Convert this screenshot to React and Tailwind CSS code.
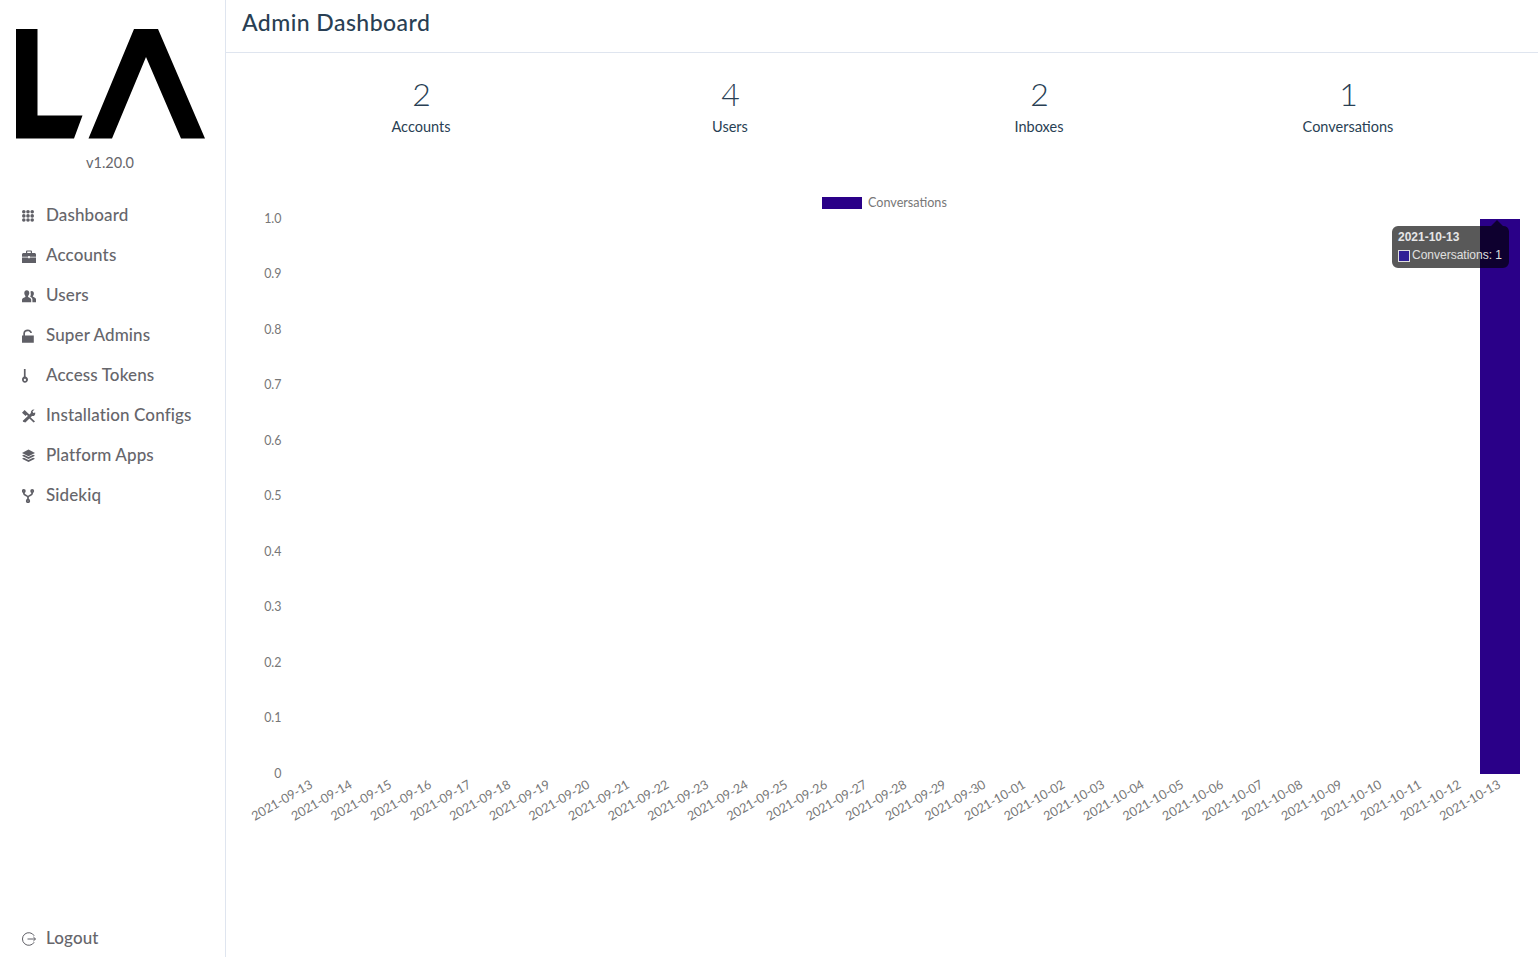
import React from "react";

const font = { fontFamily: "Lato, 'Noto Sans', sans-serif" };

const Icon = ({ children }) => (
  <svg viewBox="0 0 14 14" className="w-[14px] h-[14px] shrink-0 mt-[2px] fill-[#5f5f66]">
    {children}
  </svg>
);

const GridIcon = () => (
  <Icon>
    {[2.8, 6.9, 11].map((y) =>
      [1.8, 6, 10.2].map((x) => <circle key={`${x}-${y}`} cx={x} cy={y} r="1.8" />)
    )}
  </Icon>
);

const BriefcaseIcon = () => (
  <Icon>
    <path d="M0 5.600C0 4.600.7 4 1.600 4H4V2.600C4 1.900 4.500 1.400 5.200 1.400h3.600C9.500 1.400 10 1.900 10 2.600V4h2.400c.9 0 1.600.6 1.600 1.600v2.100H7.800V7H6.200V7.700H0zM5.200 4h3.600V2.600H5.200zM0 8.400H6.200V9.300H7.800V8.400H14V14H0z" />
  </Icon>
);

const UsersIcon = () => (
  <Icon>
    <path d="M4.800 1.200C6.400 1.200 7.300 2.500 7.300 4.100 7.300 5.300 6.800 6.300 6.100 6.900V8C7.300 8.500 9.200 9.200 9.200 10.700V13.200H0V10.700C0 9.200 2.100 8.500 3.400 8V6.900C2.700 6.300 2.300 5.300 2.300 4.100 2.300 2.500 3.200 1.200 4.800 1.200Z" />
    <path d="M9.700 2C11.100 2 11.900 3.100 11.900 4.500 11.900 5.500 11.500 6.400 10.900 6.900V7.800C12 8.200 14 8.900 14 10.300V13.200H10.400V10.400C10.400 9.100 9.400 8.300 8.200 7.700 8.900 6.800 9 5.600 8.500 2.600 8.800 2.200 9.200 2 9.700 2Z" />
  </Icon>
);

const LockIcon = () => (
  <Icon>
    <path d="M0 6.500H1.300V4.400C1.300 2 3.200.6 5.700.6 8.100.6 9.700 2 10 3.900H8.300C8 2.900 7 2.200 5.700 2.200 4.100 2.200 3 3.100 3 4.500V6.500H11.800V13.800H0Z" />
  </Icon>
);

const KeyIcon = () => (
  <Icon>
    <path d="M1.900 0H3.600V7.400C5 7.900 6 9.100 6 10.500 6 12.400 4.600 13.800 2.900 13.800 1.200 13.800 0 12.400 0 10.500 0 9.100.8 7.900 1.900 7.400ZM2.900 9.700C2.300 9.700 1.800 10.200 1.800 10.900 1.800 11.600 2.300 12.100 2.900 12.100 3.500 12.100 4 11.600 4 10.900 4 10.200 3.500 9.700 2.900 9.700Z" />
  </Icon>
);

const ToolsIcon = () => (
  <Icon>
    <path d="M2.600.9 6 4.200 7.400 5.500 8.900 4C8.500 2.400 9.800.2 12.500.5L10.500 2.500 11.300 4 13.200 3.400C13.800 5.800 11.800 7.400 10 7L3.400 13.600 1 12.800.8 11.700 5.900 6.900 4.800 5.800 3.600 6.900 0 3.800Z" />
    <path d="M8 7.800 13 12.400 11.600 13.600 6.800 9Z" />
  </Icon>
);

const LayersIcon = () => (
  <Icon>
    <path d="M6.500.6 13 3.900 6.500 7.200 0 3.900Z" />
    <path d="M1.900 5.700 6.500 8 11.100 5.700 13 6.800 6.500 10.100 0 6.800Z" />
    <path d="M1.900 8.700 6.500 11 11.100 8.700 13 9.800 6.500 13.100 0 9.800Z" />
  </Icon>
);

const ForkIcon = () => (
  <Icon>
    <g fill="none" stroke="#5f5f66" strokeWidth="1.700">
      <circle cx="1.800" cy="2" r="1.100" />
      <circle cx="10.200" cy="2" r="1.100" />
      <circle cx="6" cy="12" r="1.300" />
      <path d="M1.800 3V4.200C1.800 6.500 6 6.300 6 8.200V10.700M10.200 3V4.200C10.200 6.500 6 6.300 6 8.200" />
    </g>
  </Icon>
);

const LogoutIcon = () => (
  <svg viewBox="0 0 14 14" className="w-[14px] h-[14px] shrink-0 mt-[2px] fill-none stroke-[#5f5f66]" strokeWidth="1">
    <path d="M12.200 3.800A6.300 6.300 0 1 0 12.200 10.200M5.500 7H13.500M11.300 4.900 13.500 7 11.300 9.100" />
  </svg>
);

const navItems = [
  { label: "Dashboard", icon: GridIcon },
  { label: "Accounts", icon: BriefcaseIcon },
  { label: "Users", icon: UsersIcon },
  { label: "Super Admins", icon: LockIcon },
  { label: "Access Tokens", icon: KeyIcon },
  { label: "Installation Configs", icon: ToolsIcon },
  { label: "Platform Apps", icon: LayersIcon },
  { label: "Sidekiq", icon: ForkIcon },
];

const stats = [
  { value: 2, label: "Accounts" },
  { value: 4, label: "Users" },
  { value: 2, label: "Inboxes" },
  { value: 1, label: "Conversations" },
];

const yTicks = ["1.0", "0.9", "0.8", "0.7", "0.6", "0.5", "0.4", "0.3", "0.2", "0.1", "0"];

const dates = [
  ...Array.from({ length: 18 }, (_, i) => `2021-09-${13 + i}`),
  ...Array.from({ length: 13 }, (_, i) => `2021-10-${String(i + 1).padStart(2, "0")}`),
];

const Logo = () => (
  <svg viewBox="0 0 189 110" className="w-[189px] h-[110px] fill-black">
    <path d="M0 0H21.500V86.500H66.500L58 109.500H0Z" />
    <path d="M72.500 109.500 118 0H142L189 109.500H165L130 28 96 109.500Z" />
  </svg>
);

const Chart = () => (
  <svg viewBox="226 170 1312 670" className="block w-[1312px] h-[670px]" style={font}>
    <rect x="822" y="197" width="40" height="12" fill="#2a0088" />
    <text x="868" y="207" fontSize="12.600" fill="#777">Conversations</text>

    {yTicks.map((t, i) => (
      <text key={t} x="281.500" y={222.6 + i * 55.5} fontSize="12.400" fill="#777" textAnchor="end">{t}</text>
    ))}

    {dates.map((d, i) => (
      <text
        key={d}
        transform={`translate(${313.5 + i * 39.6} 787) rotate(-30)`}
        fontSize="12.600"
        fill="#777"
        textAnchor="end"
      >
        {d}
      </text>
    ))}

    <rect x="1480" y="219" width="40" height="555" fill="#2a0088" />

    {/* tooltip */}
    <g>
      <path d="M1392 232a6 6 0 0 1 6-6h93l6-6 6 6h0a6 6 0 0 1 6 5v31a6 6 0 0 1-6 6h-105a6 6 0 0 1-6-6z" fill="#000" fillOpacity="0.65" />
      <text x="1398" y="241" fontSize="12" fontWeight="700" fill="#e6e6e6" fontFamily="'Liberation Sans', sans-serif">2021-10-13</text>
      <rect x="1398.500" y="250.500" width="11" height="11" fill="#2f1f96" stroke="#ddd" />
      <text x="1412" y="259" fontSize="12" fill="#e0e0e0" fontFamily="'Liberation Sans', sans-serif">Conversations: 1</text>
    </g>
  </svg>
);

const App = () => {
  return (
    <div className="flex h-[957px] overflow-hidden bg-white" style={font}>
      <aside className="w-[226px] shrink-0 border-r border-[#dfe5ef] flex flex-col justify-between">
        <div>
          <div className="pt-[29px] pl-[16px]">
            <Logo />
          </div>
          <p className="mt-[14px] pr-[5px] text-center text-[14.5px] leading-5 text-[#66666b]">v1.20.0</p>
          <nav className="mt-[22px]">
            {navItems.map(({ label, icon: NavIcon }) => (
              <a key={label} href="#" className="flex items-center h-10 pl-[22px] gap-[10px] text-[17px] tracking-[0.12px] text-[#66666b] font-medium">
                <NavIcon />
                <span>{label}</span>
              </a>
            ))}
          </nav>
        </div>
        <a href="#" className="flex items-center h-10 pl-[22px] gap-[10px] text-[17px] tracking-[0.12px] text-[#66666b] font-medium -mb-px">
          <LogoutIcon />
          <span>Logout</span>
        </a>
      </aside>

      <main className="flex-1 min-w-0">
        <header className="h-[53px] border-b border-[#dfe5ef] pl-[16px] flex items-center">
          <h1 className="text-[23px] tracking-[0.45px] font-medium text-[#293f54] -mt-[7px]">Admin Dashboard</h1>
        </header>
        <section className="grid grid-cols-4 pl-[41px] pr-[35px] pt-[21px] text-[#293f54]">
          {stats.map((s) => (
            <div key={s.label} className="text-center">
              <div className="text-[32px] leading-10 font-light">{s.value}</div>
              <div className="text-[14.5px] leading-5 mt-[3px] pr-[1px]">{s.label}</div>
            </div>
          ))}
        </section>
        <div className="mt-[33px]">
          <Chart />
        </div>
      </main>
    </div>
  );
};

export default App;
